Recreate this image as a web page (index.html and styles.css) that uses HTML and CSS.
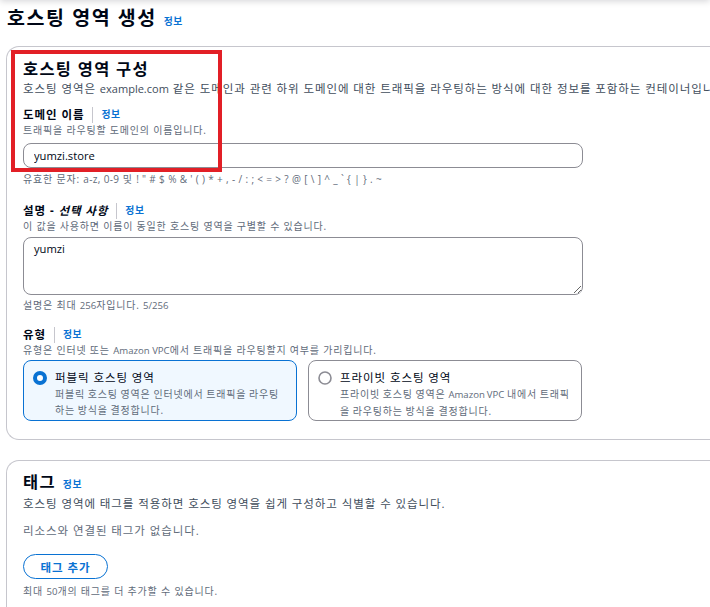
FILE: index.html
```html
<!DOCTYPE html>
<html lang="ko">
<head>
<meta charset="utf-8">
<title>호스팅 영역 생성</title>
<link rel="stylesheet" href="styles.css">
</head>
<body>
<div class="topshadow"></div>
<main class="page">
  <header class="page-head">
    <h1 class="page-title">호스팅 영역 생성</h1>
    <a class="info" href="#">정보</a>
  </header>

  <section class="card card-config">
    <div class="card-head">
      <h2 class="card-title">호스팅 영역 구성</h2>
      <p class="card-desc">호스팅 영역은 <span class="en">example.com</span> 같은 도메인과 관련 하위 도메인에 대한 트래픽을 라우팅하는 방식에 대한 정보를 포함하는 컨테이너입니다.</p>
    </div>

    <div class="field field-first">
      <div class="label-row"><span class="label">도메인 이름</span><span class="sep"></span><a class="info" href="#">정보</a></div>
      <div class="hint">트래픽을 라우팅할 도메인의 이름입니다.</div>
      <input class="input" type="text" value="yumzi.store">
      <div class="constraint">유효한 문자: <span class="sym">a-z, 0-9</span> 및 <span class="sym">! " # $ % &amp; ' ( ) * + , - / : ; &lt; = &gt; ? @ [ \ ] ^ _ ` { | } . ~</span></div>
    </div>

    <div class="field field-desc">
      <div class="label-row"><span class="label">설명 - <i>선택 사항</i></span><span class="sep"></span><a class="info" href="#">정보</a></div>
      <div class="hint">이 값을 사용하면 이름이 동일한 호스팅 영역을 구별할 수 있습니다.</div>
      <textarea class="textarea">yumzi</textarea>
      <div class="constraint counter">설명은 최대 <span class="en">256</span>자입니다. <span class="en">5/256</span></div>
    </div>

    <div class="field field-type">
      <div class="label-row"><span class="label">유형</span><span class="sep"></span><a class="info" href="#">정보</a></div>
      <div class="hint">유형은 인터넷 또는 <span class="en">Amazon VPC</span>에서 트래픽을 라우팅할지 여부를 가리킵니다.</div>
      <div class="tiles">
        <label class="tile tile-on">
          <svg class="radio" width="14" height="14" viewBox="0 0 14 14"><circle cx="7" cy="7" r="5" fill="#fff" stroke="#0972d3" stroke-width="4"/></svg>
          <span class="tile-text">
            <span class="tile-title">퍼블릭 호스팅 영역</span>
            <span class="tile-desc">퍼블릭 호스팅 영역은 인터넷에서 트래픽을 라우팅하는 방식을 결정합니다.</span>
          </span>
        </label>
        <label class="tile">
          <svg class="radio" width="14" height="14" viewBox="0 0 14 14"><circle cx="7" cy="7" r="6" fill="#fff" stroke="#8c8c94" stroke-width="1.6"/></svg>
          <span class="tile-text">
            <span class="tile-title">프라이빗 호스팅 영역</span>
            <span class="tile-desc">프라이빗 호스팅 영역은 <span class="en">Amazon VPC</span> 내에서 트래픽을 라우팅하는 방식을 결정합니다.</span>
          </span>
        </label>
      </div>
    </div>
  </section>

  <section class="card card-tags">
    <div class="card-head">
      <div class="title-row"><h2 class="card-title">태그</h2><a class="info" href="#">정보</a></div>
      <p class="card-desc tags-desc">호스팅 영역에 태그를 적용하면 호스팅 영역을 쉽게 구성하고 식별할 수 있습니다.</p>
    </div>
    <p class="empty">리소스와 연결된 태그가 없습니다.</p>
    <button class="btn" type="button">태그 추가</button>
    <div class="constraint btn-hint">최대 <span class="en">50</span>개의 태그를 더 추가할 수 있습니다.</div>
  </section>
</main>
<div class="annotation"></div>
</body>
</html>
```

FILE: styles.css
```css
html, body {
  margin: 0;
  padding: 0;
  overflow: hidden;
  background: #ffffff;
}
body {
  font-family: "Open Sans", "Noto Sans CJK KR", sans-serif;
  color: #000716;
  font-size: 11.5px;
  line-height: 16px;
  position: relative;
  width: 710px;
  height: 607px;
}
.topshadow {
  position: absolute;
  left: 0;
  top: -10px;
  width: 710px;
  height: 10px;
  box-shadow: 0 1px 7px rgba(0, 7, 22, 0.18);
}
.page {
  padding: 6px 0 0 6px;
}
.page-head {
  display: flex;
  align-items: baseline;
  gap: 7px;
  padding-left: 1px;
}
.page-title {
  margin: 0;
  font-size: 19.5px;
  line-height: 24px;
  font-weight: 700;
  letter-spacing: 0.08em;
}
.info {
  color: #0972d3;
  font-weight: 700;
  font-size: 9.8px;
  letter-spacing: 0.06em;
  text-decoration: none;
}
.en {
  letter-spacing: 0;
  font-size: 0.96em;
}
.sym {
  letter-spacing: 0.35px;
}
.card {
  width: 760px;
  box-sizing: border-box;
  border: 1px solid #c6c6cd;
  border-radius: 13px;
  background: #fff;
}
.card-config {
  margin-top: 16px;
  padding: 12px 16px 18px 16px;
  border-right: none;
  border-top-right-radius: 0;
  border-bottom-right-radius: 0;
}
.card-tags {
  margin-top: 20px;
  padding: 11px 16px 16px 16px;
  border-right: none;
  border-bottom: none;
  height: 160px;
}
.card-title {
  margin: 0;
  font-size: 16.4px;
  line-height: 20px;
  font-weight: 700;
  letter-spacing: 0.08em;
}
.title-row {
  display: flex;
  align-items: baseline;
  gap: 7px;
}
.card-desc {
  margin: 2px 0 0 0;
  color: #414d5c;
  font-size: 11.5px;
  line-height: 16px;
  letter-spacing: 0.08em;
  white-space: nowrap;
}
.tags-desc {
  margin-top: 3px;
}
.field {
  margin-top: 16px;
}
.field-first {
  margin-top: 10px;
}
.field-desc {
  margin-top: 17px;
}
.field-type {
  margin-top: 15px;
}
.label-row {
  display: flex;
  align-items: center;
  height: 16px;
}
.label {
  font-weight: 700;
  font-size: 11.5px;
  letter-spacing: 0.08em;
}
.label i {
  font-style: italic;
}
.sep {
  width: 1px;
  height: 16px;
  background: #c6c6cd;
  margin: 0 8px;
}
.hint {
  color: #5f6b7a;
  font-size: 10px;
  line-height: 14px;
  letter-spacing: 0.08em;
}
.constraint {
  color: #5f6b7a;
  font-size: 10px;
  line-height: 13px;
  margin-top: 5px;
  letter-spacing: 0.08em;
}
.input, .textarea {
  display: block;
  box-sizing: border-box;
  width: 560px;
  border: 1px solid #8c8c94;
  border-radius: 8px;
  font-family: "Open Sans", "Noto Sans CJK KR", sans-serif;
  font-size: 11.2px;
  color: #000716;
  background: #fff;
  outline: none;
}
.input {
  margin-top: 6px;
  height: 25px;
  padding: 0 10px;
}
.textarea {
  margin-top: 4px;
  height: 58px;
  padding: 3px 10px;
  line-height: 16px;
  resize: vertical;
}
.counter {
  margin-top: 4px;
}
.tiles {
  display: grid;
  grid-template-columns: 274px 274px;
  gap: 11px;
  margin-top: 2px;
}
.tile {
  box-sizing: border-box;
  height: 61px;
  display: flex;
  align-items: flex-start;
  gap: 8px;
  padding: 9px 8px 0 9px;
  border: 1px solid #8c8c94;
  border-radius: 8px;
  background: #fff;
}
.tile-on {
  border-color: #0972d3;
  background: #f0f8ff;
}
.radio {
  flex: none;
  margin-top: 1px;
}
.tile-text {
  display: flex;
  flex-direction: column;
  min-width: 0;
}
.tile-title {
  font-size: 11.5px;
  line-height: 16px;
  letter-spacing: 0.08em;
}
.tile-desc {
  color: #5f6b7a;
  font-size: 10px;
  line-height: 16px;
  letter-spacing: 0.08em;
  word-spacing: -0.6px;
}
.empty {
  margin: 11px 0 0 0;
  color: #5f6b7a;
  font-size: 11.5px;
  line-height: 16px;
  letter-spacing: 0.08em;
}
.btn {
  display: block;
  margin-top: 15px;
  box-sizing: border-box;
  width: 85px;
  height: 25px;
  border: 1.5px solid #0972d3;
  border-radius: 14px;
  background: #fff;
  color: #0972d3;
  font-family: "Open Sans", "Noto Sans CJK KR", sans-serif;
  font-weight: 700;
  font-size: 11.5px;
  letter-spacing: 0.08em;
  padding: 0;
}
.btn-hint {
  margin-top: 6px;
}
.annotation {
  position: absolute;
  left: 11px;
  top: 50px;
  width: 203px;
  height: 114px;
  border: 4px solid #e21f26;
}
```
